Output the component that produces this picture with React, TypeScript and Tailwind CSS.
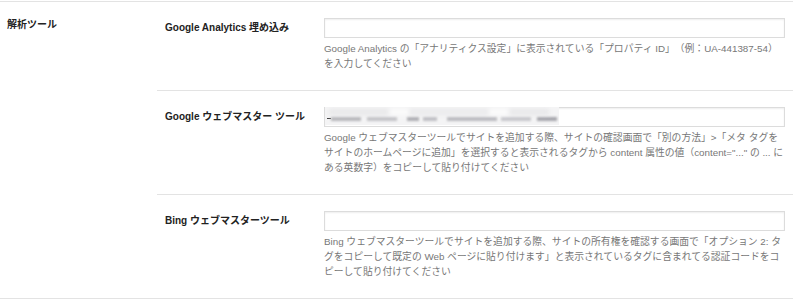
const font = "font-['Liberation_Sans','Noto_Sans_CJK_JP',sans-serif]"

interface Field {
  id: string
  label: string
  help: string[]
  blurred?: boolean
}

// help text lines kept as in the original wrap
const fields: Field[] = [
  {
    id: 'ga',
    label: 'Google Analytics 埋め込み',
    help: [
      'Google Analytics の「アナリティクス設定」に表示されている「プロパティ ID」（例：UA-441387-54）',
      'を入力してください',
    ],
  },
  {
    id: 'gwt',
    label: 'Google ウェブマスター ツール',
    help: [
      'Google ウェブマスターツールでサイトを追加する際、サイトの確認画面で「別の方法」>「メタ タグを',
      'サイトのホームページに追加」を選択すると表示されるタグから content 属性の値（content="..." の ... に',
      'ある英数字）をコピーして貼り付けてください',
    ],
    blurred: true,
  },
  {
    id: 'bing',
    label: 'Bing ウェブマスターツール',
    help: [
      'Bing ウェブマスターツールでサイトを追加する際、サイトの所有権を確認する画面で「オプション 2: タ',
      'グをコピーして既定の Web ページに貼り付けます」と表示されているタグに含まれてる認証コードをコ',
      'ピーして貼り付けてください',
    ],
  },
]

// blurred-out value in the webmaster tools input
const patches = [
  'w-[30px] bg-[#b8b8bc]',
  'w-[6px] bg-transparent',
  'w-[30px] bg-[#c4c4c8]',
  'w-[10px] bg-transparent',
  'w-[12px] bg-[#b0b0b4]',
  'w-[4px] bg-transparent',
  'w-[14px] bg-[#c0c0c4]',
  'w-[10px] bg-transparent',
  'w-[50px] bg-[#bcbcc0]',
  'w-[4px] bg-transparent',
  'w-[30px] bg-[#c8c8cc]',
  'w-[6px] bg-transparent',
  'w-[20px] bg-[#a8a8ae]',
]

function BlurredValue() {
  return (
    <div className="absolute left-0 top-[-1px] w-[234px] h-[18px] bg-[#f4f4f5] overflow-hidden">
      <div className="absolute left-[2px] top-[11px] w-[4px] h-[1px] bg-[#444]" />
      <div className="absolute left-[6px] top-[10px] flex h-[4px] blur-[1px]">
        {patches.map((p, i) => (
          <span key={i} className={`h-full ${p}`} />
        ))}
      </div>
      <div className="absolute left-[4px] top-[2px] flex h-[6px] blur-[2px] opacity-60">
        <span className="w-[60px] bg-[#e0e0e2]" />
        <span className="w-[20px] bg-white" />
        <span className="w-[80px] bg-[#e4e4e6]" />
        <span className="w-[20px] bg-white" />
        <span className="w-[40px] bg-[#e0e0e2]" />
      </div>
    </div>
  )
}

export default function App() {
  return (
    <div className={`w-[800px] h-[302px] bg-white pt-[1px] ${font}`}>
      <div className="w-[793px] flex border-t border-b border-[#e3e3e3]">
        {/* section heading */}
        <div className="w-[157px] shrink-0 pl-[7px] pt-[16px] text-[10px] leading-[14px] font-bold text-[#222]">
          解析ツール
        </div>

        <div className="flex-1">
          {fields.map((field, i) => (
            <div
              key={field.id}
              className={`flex pt-[16px] pb-[19px] ${i > 0 ? 'border-t border-[#e3e3e3]' : ''}`}
            >
              <div className="w-[167px] shrink-0 pl-[8px] text-[10px] leading-[20px] font-bold text-[#222]">
                {field.label}
              </div>
              <div className="w-[461px]">
                <div className="relative h-[20px] border border-[#dcdcdc] bg-white shadow-[inset_0_1px_2px_rgba(0,0,0,0.07)]">
                  {field.blurred && <BlurredValue />}
                </div>
                <div className="mt-[3px] text-[9.8px] leading-[15px] text-[#777] [text-spacing-trim:space-all]">
                  {field.help.map((line, j) => (
                    <p key={j} className="whitespace-nowrap">
                      {line}
                    </p>
                  ))}
                </div>
              </div>
            </div>
          ))}
        </div>
      </div>
    </div>
  )
}
